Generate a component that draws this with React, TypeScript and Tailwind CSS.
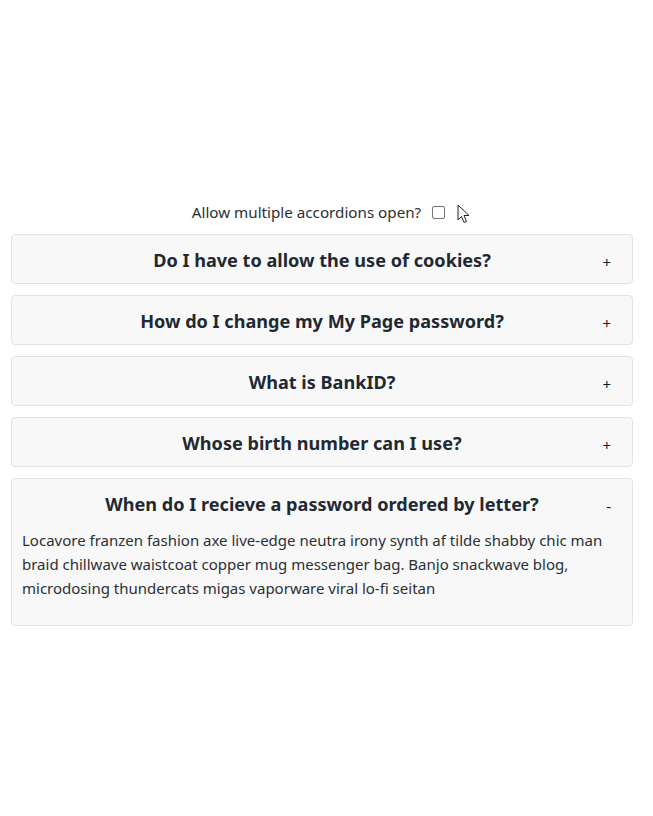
import React, {useState} from "react";

const items = [
 {q: "Do I have to allow the use of cookies?", a: "Locavore franzen fashion axe live-edge neutra irony synth af tilde shabby chic man braid chillwave waistcoat copper mug messenger bag. Banjo snackwave blog, microdosing thundercats migas vaporware viral lo-fi seitan"},
 {q: "How do I change my My Page password?", a: "Locavore franzen fashion axe live-edge neutra irony synth af tilde shabby chic man braid chillwave waistcoat copper mug messenger bag. Banjo snackwave blog, microdosing thundercats migas vaporware viral lo-fi seitan"},
 {q: "What is BankID?", a: "Locavore franzen fashion axe live-edge neutra irony synth af tilde shabby chic man braid chillwave waistcoat copper mug messenger bag. Banjo snackwave blog, microdosing thundercats migas vaporware viral lo-fi seitan"},
 {q: "Whose birth number can I use?", a: "Locavore franzen fashion axe live-edge neutra irony synth af tilde shabby chic man braid chillwave waistcoat copper mug messenger bag. Banjo snackwave blog, microdosing thundercats migas vaporware viral lo-fi seitan"},
 {q: "When do I recieve a password ordered by letter?", a: "Locavore franzen fashion axe live-edge neutra irony synth af tilde shabby chic man braid chillwave waistcoat copper mug messenger bag. Banjo snackwave blog, microdosing thundercats migas vaporware viral lo-fi seitan"},
];

const App: React.FC = () => {
 const [multiple, setMultiple] = useState(false);
 const [open, setOpen] = useState<number[]>([4]);

 const toggle = (i: number) => {
  if (open.includes(i)) {
   setOpen(open.filter((x) => x !== i));
  } else {
   setOpen(multiple ? [...open, i] : [i]);
  }
 };

 return (
  <div className="min-h-[816px] bg-white pt-[200px] font-['Noto_Sans',sans-serif] text-[#212529]">
   <div className="flex items-center justify-center pl-[10px] text-[15.2px] leading-[24px] text-[#2b3035]">
    <span>Allow multiple accordions open?</span>
    <input
     type="checkbox"
     checked={multiple}
     onChange={() => setMultiple(!multiple)}
     className="ml-[11px] h-[13px] w-[13px] appearance-none rounded-[2px] border border-[#767676] bg-white"
    />
    <svg className="ml-[12px] mt-[4px]" width="14" height="20" viewBox="0 0 14 20">
     <path d="M1 1 L1 16 L4.5 12.5 L7 18.5 L9.5 17.5 L7 11.5 L12 11.5 Z" fill="white" stroke="#222" strokeWidth="1" strokeLinejoin="round" />
    </svg>
   </div>
   <div className="ml-[11px] mt-[10px] flex w-[622px] flex-col gap-[11px]">
    {items.map((item, i) => {
     const isOpen = open.includes(i);
     return (
      <div key={i} className="rounded-[4px] border border-[#e3e3e3] bg-[#f8f8f8]">
       <button
        onClick={() => toggle(i)}
        className="relative flex h-[48px] w-full items-center justify-center pt-[3px] text-[18.1px] font-bold text-[#1f2933]"
       >
        {item.q}
        <span className="absolute right-[21px] top-[16px] text-[15px] font-normal text-[#111827]">{isOpen ? "-" : "+"}</span>
       </button>
       {isOpen && (
        <div className="px-[10px] pb-[25px] pt-[1px] text-[15px] leading-[24px] text-[#2b3035]">{item.a}</div>
       )}
      </div>
     );
    })}
   </div>
  </div>
 );
};

export default App;
